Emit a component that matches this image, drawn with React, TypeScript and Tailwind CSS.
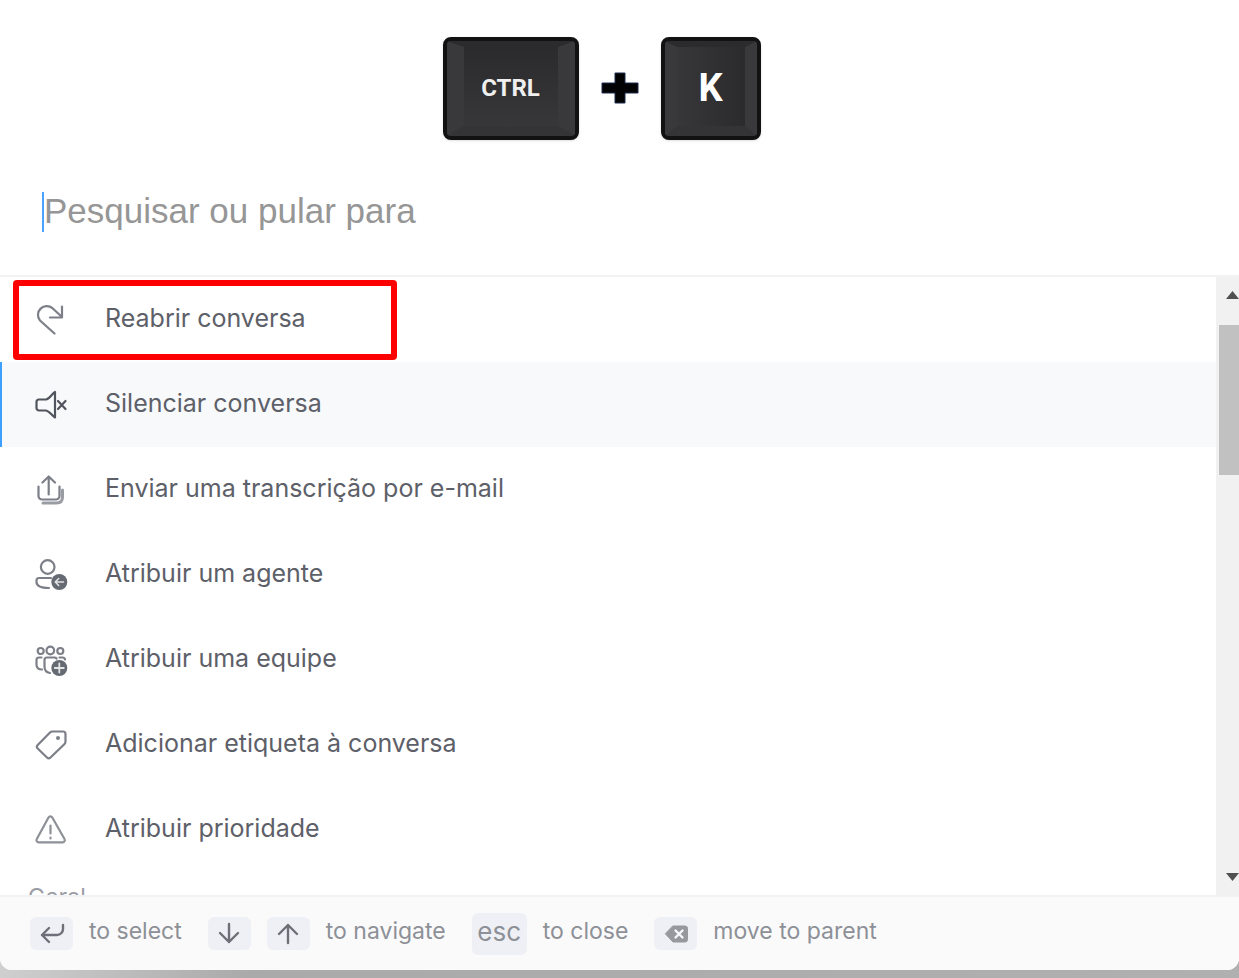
import { useState } from 'react'
import type { ReactNode } from 'react'

const acoes: { id: string; titulo: string; cor: string; icone: ReactNode }[] = [
  {
    id: 'reabrir',
    titulo: 'Reabrir conversa',
    cor: 'text-[#7c7f87]',
    icone: <path d="M21.5 31.5 7 18.5A8.8 8.8 0 0 1 19.5 6.2L29 15M29 4.5v11H17" />
  },
  {
    id: 'silenciar',
    titulo: 'Silenciar conversa',
    cor: 'text-[#50545c]',
    icone: (
      <>
        <path d="M22 5v25.5c-3.5-2-5.500-6.5-9-7H6A2.500 2.500 0 0 1 3.500 21v-6A2.500 2.500 0 0 1 6 12.500h7c3.500-.5 5.500-5.500 9-7.500Z" />
        <path d="m25 14 7.500 8m0-8L25 22" />
      </>
    )
  },
  {
    id: 'transcricao',
    titulo: 'Enviar uma transcrição por e-mail',
    cor: 'text-[#7c7f87]',
    icone: (
      <>
        <path d="M15.700 22.500V5M9.500 10.500l6.200-6 6.300 6" />
        <path d="M5.500 14.500V24A3.500 3.500 0 0 0 9 27.500h14a3.500 3.500 0 0 0 3.500-3.500v-9.500" />
        <path d="M10 31h13.500c4 0 6-2 6-6v-7" strokeWidth="3" stroke="#9a9ca3" />
      </>
    )
  },
  {
    id: 'agente',
    titulo: 'Atribuir um agente',
    cor: 'text-[#7c7f87]',
    icone: (
      <>
        <circle cx="14.700" cy="10" r="6.800" />
        <path d="M18 21H6a2.500 2.500 0 0 0-2.500 2.500V25c0 4.500 4.500 6 12.500 6" />
        <circle cx="26.300" cy="25" r="8" fill="#666a72" stroke="none" />
        <path d="M30.500 25h-8m3.200-3.500L22.200 25l3.500 3.500" stroke="#e4e5e7" strokeWidth="1.500" />
      </>
    )
  },
  {
    id: 'equipe',
    titulo: 'Atribuir uma equipe',
    cor: 'text-[#7c7f87]',
    icone: (
      <>
        <circle cx="7.700" cy="9" r="3" />
        <circle cx="17.300" cy="8.500" r="3.800" />
        <circle cx="27.300" cy="9" r="3" />
        <path d="M8.500 15.500H6A2.500 2.500 0 0 0 3.500 18v4.500c0 3 2 5 5.500 5M17 31c-3.500-.5-5.500-3-5.500-6.500V18a2.500 2.500 0 0 1 2.500-2.500h7.500a2.500 2.500 0 0 1 2 1M26.500 15.500h3a2.500 2.500 0 0 1 2.500 2" />
        <circle cx="26.300" cy="26" r="8" fill="#666a72" stroke="none" />
        <path d="M26.300 21.500v9M21.800 26h9" stroke="#e4e5e7" strokeWidth="1.800" />
      </>
    )
  },
  {
    id: 'etiqueta',
    titulo: 'Adicionar etiqueta à conversa',
    cor: 'text-[#7c7f87]',
    icone: (
      <>
        <path d="M19.500 4.500H30A2.500 2.500 0 0 1 32.500 7v7.500a4 4 0 0 1-1.200 2.800L17.500 30.500a2.500 2.500 0 0 1-3.500 0l-9.300-9a2.500 2.500 0 0 1 0-3.500L17 5.500a4 4 0 0 1 2.500-1Z" />
        <circle cx="25" cy="11" r="2" fill="currentColor" stroke="none" />
      </>
    )
  },
  {
    id: 'prioridade',
    titulo: 'Atribuir prioridade',
    cor: 'text-[#8e9097]',
    icone: (
      <>
        <path d="M15.500 5.500a2.200 2.200 0 0 1 3.800 0l12.200 21.500a2.200 2.200 0 0 1-1.900 3.300H5.700A2.200 2.200 0 0 1 3.800 27Z" />
        <path d="M17.500 13.500v8m0 4v1" />
      </>
    )
  }
]

function TeclaRodape({ nome, children }: { nome: string; children: ReactNode }) {
  return (
    <kbd aria-label={nome} className="flex h-[33px] w-[43px] items-center justify-center rounded-md bg-[#eff0f5] text-[#6d7079]">
      <svg viewBox="0 0 26 24" className="h-6 w-[26px]" fill="none" stroke="currentColor" strokeWidth="2.4" strokeLinecap="round" strokeLinejoin="round">
        {children}
      </svg>
    </kbd>
  )
}

export default function App() {
  const [busca, setBusca] = useState('')
  const [selecionada, setSelecionada] = useState('silenciar')

  return (
    <div className="flex h-screen flex-col overflow-hidden bg-white font-['Inter',sans-serif]">
      {/* Atalho */}
      <div className="flex h-[154px] shrink-0 items-center justify-center gap-[22px] pt-[22px] pr-9">
        <kbd className="flex h-[103px] w-[136px] rounded-lg border-4 border-[#121212] bg-[#2b2b2d] font-['Roboto',sans-serif] text-2xl font-bold text-[#efefef] shadow-sm">
          <span className="flex flex-1 items-center justify-center rounded-sm border-x-[17px] border-t-[6px] border-b-[10px] border-x-[#39393b] border-t-[#2b2b2d] border-b-[#343436] bg-linear-to-b from-[#2b2b2d] to-[#373739] pt-1">
            CTRL
          </span>
        </kbd>
        <svg viewBox="0 0 38 32" className="h-8 w-[38px]" aria-hidden="true">
          <path d="M14 1h10v10h13v10H24v10H14V21H1V11h13Z" fill="#020204" stroke="#1c2b4d" />
        </svg>
        <kbd className="flex h-[103px] w-[100px] rounded-lg border-4 border-[#121212] bg-[#2b2b2d] font-['Roboto',sans-serif] text-[38px] font-bold text-white shadow-sm">
          <span className="flex flex-1 items-center justify-center rounded-sm border-x-[12px] border-t-[6px] border-b-[10px] border-x-[#39393b] border-t-[#2b2b2d] border-b-[#343436] bg-linear-to-r from-[#373739] to-[#2b2b2d] pt-1">
            K
          </span>
        </kbd>
      </div>

      {/* Paleta de comandos */}
      <div className="flex min-h-0 flex-1 flex-col bg-linear-to-r from-[#cfcfcf] via-[#aaaaaa] via-20% to-[#b0b0b0] pb-2">
        <div className="flex min-h-0 flex-1 flex-col overflow-hidden rounded-b-xl bg-white">
          <div className="flex h-[123px] shrink-0 items-center border-b-2 border-[#f2f2f5] px-[42px] pb-1.5">
            <input
              type="text"
              aria-label="Pesquisar ou pular para"
              placeholder="Pesquisar ou pular para"
              value={busca}
              onChange={(e) => setBusca(e.target.value)}
              className="h-10 w-full border-l-2 border-[#4ba3ff] bg-transparent font-['Liberation_Sans',sans-serif] text-[35px] text-[#444] outline-none placeholder:text-[#969696]"
            />
          </div>

          <div className="flex min-h-0 flex-1">
            <div className="min-w-0 flex-1 overflow-hidden">
              {acoes.map((acao) => (
                <button
                  key={acao.id}
                  onClick={() => setSelecionada(acao.id)}
                  className={`relative flex h-[85px] w-full items-center gap-9 border-l-2 pl-[31px] text-left text-[25px] text-[#5d6068] ${
                    selecionada === acao.id ? 'border-[#3f9fff] bg-[#f8f9fb]' : 'border-transparent'
                  }`}
                >
                  <svg viewBox="0 0 36 36" className={`size-9 shrink-0 ${acao.cor}`} fill="none" stroke="currentColor" strokeWidth="2.2" strokeLinecap="round" strokeLinejoin="round" aria-hidden="true">
                    {acao.icone}
                  </svg>
                  <span className="pb-0.5">{acao.titulo}</span>
                  {acao.id === 'reabrir' && (
                    <span className="absolute top-[3px] left-[11px] h-20 w-96 rounded-sm border-6 border-[#ff0000]"></span>
                  )}
                </button>
              ))}
              <h2 className="pt-2 pl-7 text-[23px] text-[#9b9da5]">Geral</h2>
            </div>

            {/* Barra de rolagem */}
            <div className="flex w-[23px] shrink-0 flex-col items-end bg-[#f1f1f1] py-3" aria-hidden="true">
              <svg viewBox="0 0 13 12" className="h-3 w-[13px]" fill="#505050">
                <path d="M0 10 6.500 2 13 10Z" />
              </svg>
              <div className="mt-6 h-[150px] w-5 bg-[#c1c1c1]"></div>
              <svg viewBox="0 0 13 12" className="mt-auto h-3 w-[13px]" fill="#505050">
                <path d="M0 2h13L6.500 10Z" />
              </svg>
            </div>
          </div>

          {/* Rodapé */}
          <div className="flex h-[75px] shrink-0 items-center gap-[26px] border-t-2 border-[#f1f2f6] bg-[#fafafa] pl-[30px] text-[23px] text-[#8d9097]">
            <div className="flex items-center gap-4">
              <TeclaRodape nome="Enter">
                <path d="M24 3v4a6 6 0 0 1-6 6H3m7-7-7 7 7 7" />
              </TeclaRodape>
              <span className="pb-1">to select</span>
            </div>
            <div className="flex items-center gap-4">
              <TeclaRodape nome="Seta para baixo">
                <path d="M13 2v18m-9-9 9 9 9-9" />
              </TeclaRodape>
              <TeclaRodape nome="Seta para cima">
                <path d="M13 21V3m-9 9 9-9 9 9" />
              </TeclaRodape>
              <span className="pb-1">to navigate</span>
            </div>
            <div className="flex items-center gap-4">
              <kbd className="flex h-[42px] w-[55px] items-center justify-center rounded-md bg-[#eff0f5] pb-1 font-['Inter',sans-serif] text-[26px]">esc</kbd>
              <span className="pb-1">to close</span>
            </div>
            <div className="flex items-center gap-4">
              <TeclaRodape nome="Backspace">
                <path d="M10 4h12a2.500 2.500 0 0 1 2.500 2.500v11A2.500 2.500 0 0 1 22 20H10l-7.500-8Z" fill="#96989e" stroke="#96989e" strokeWidth="1" />
                <path d="m12.500 8.500 7 7m0-7-7 7" stroke="#f6f7fa" />
              </TeclaRodape>
              <span className="pb-1">move to parent</span>
            </div>
          </div>
        </div>
      </div>
    </div>
  )
}
